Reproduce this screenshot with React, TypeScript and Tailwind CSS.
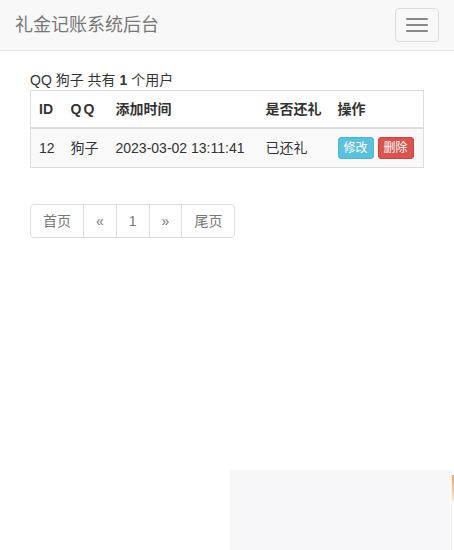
import React from "react";

const font = { fontFamily: '"Liberation Sans", "Noto Sans CJK SC", sans-serif' };

export default function App() {
  return (
    <div className="relative min-h-[550px] bg-white text-[14px] leading-[20px] text-[#333]" style={font}>
      {/* Navbar */}
      <nav className="flex h-[51px] items-start justify-between border-b border-[#e7e7e7] bg-[#f8f8f8]">
        <span className="px-[15px] py-[15px] text-[18px] leading-[20px] text-[#777]">礼金记账系统后台</span>
        <button className="mr-[15px] mt-[8px] flex flex-col gap-[4px] rounded-[4px] border border-[#ddd] px-[10px] py-[9px]">
          <span className="block h-[2px] w-[22px] rounded-[1px] bg-[#888]" />
          <span className="block h-[2px] w-[22px] rounded-[1px] bg-[#888]" />
          <span className="block h-[2px] w-[22px] rounded-[1px] bg-[#888]" />
        </button>
      </nav>

      <div className="px-[30px] pt-[19px]">
        <div className="leading-[20px]">
          QQ 狗子 共有 <b>1</b> 个用户
        </div>
        <table className="w-full table-fixed border-collapse border border-[#ddd]">
          <colgroup>
            <col className="w-[32px]" />
            <col className="w-[45px]" />
            <col className="w-[150px]" />
            <col className="w-[72px]" />
            <col />
          </colgroup>
          <thead>
            <tr className="bg-white">
              <th className="border-b-2 border-[#ddd] p-[8px] text-left font-bold">ID</th>
              <th className="border-b-2 border-[#ddd] p-[8px] text-left font-bold tracking-[2px]">QQ</th>
              <th className="border-b-2 border-[#ddd] p-[8px] text-left font-bold">添加时间</th>
              <th className="border-b-2 border-[#ddd] p-[8px] text-left font-bold">是否还礼</th>
              <th className="border-b-2 border-[#ddd] p-[8px] text-left font-bold">操作</th>
            </tr>
          </thead>
          <tbody>
            <tr className="bg-[#f9f9f9]">
              <td className="h-[38px] p-[8px] align-middle">12</td>
              <td className="p-[8px] align-middle">狗子</td>
              <td className="whitespace-nowrap p-[8px] align-middle">2023-03-02 13:11:41</td>
              <td className="p-[8px] align-middle">已还礼</td>
              <td className="whitespace-nowrap p-[8px] align-middle">
                <div className="flex gap-[4px]">
                  <span className="inline-block rounded-[3px] border border-[#46b8da] bg-[#5bc0de] px-[5px] py-[1px] text-[12px] leading-[18px] text-white">修改</span>
                  <span className="inline-block rounded-[3px] border border-[#d43f3a] bg-[#d9534f] px-[5px] py-[1px] text-[12px] leading-[18px] text-white">删除</span>
                </div>
              </td>
            </tr>
          </tbody>
        </table>

        <div className="mt-[36px] flex">
          <div className="flex rounded-[4px] text-[#777]">
            <span className="rounded-l-[4px] border border-[#ddd] px-[12px] py-[6px]">首页</span>
            <span className="-ml-px border border-[#ddd] px-[12px] py-[6px]">«</span>
            <span className="-ml-px border border-[#ddd] px-[12px] py-[6px]">1</span>
            <span className="-ml-px border border-[#ddd] px-[12px] py-[6px]">»</span>
            <span className="-ml-px rounded-r-[4px] border border-[#ddd] px-[12px] py-[6px]">尾页</span>
          </div>
        </div>
      </div>

      {/* floating widget at bottom right */}
      <div className="absolute left-[230px] top-[470px] h-[80px] w-[220px] bg-[#f7f7f9]" />
      <div className="absolute left-[451px] top-[470px] h-[80px] w-px bg-[#f2f2f2]" />
      <div className="absolute left-[452px] top-[475px] h-[26px] w-[2px] bg-gradient-to-b from-[#f3a25a] to-[#fde7d2]" />
    </div>
  );
}
